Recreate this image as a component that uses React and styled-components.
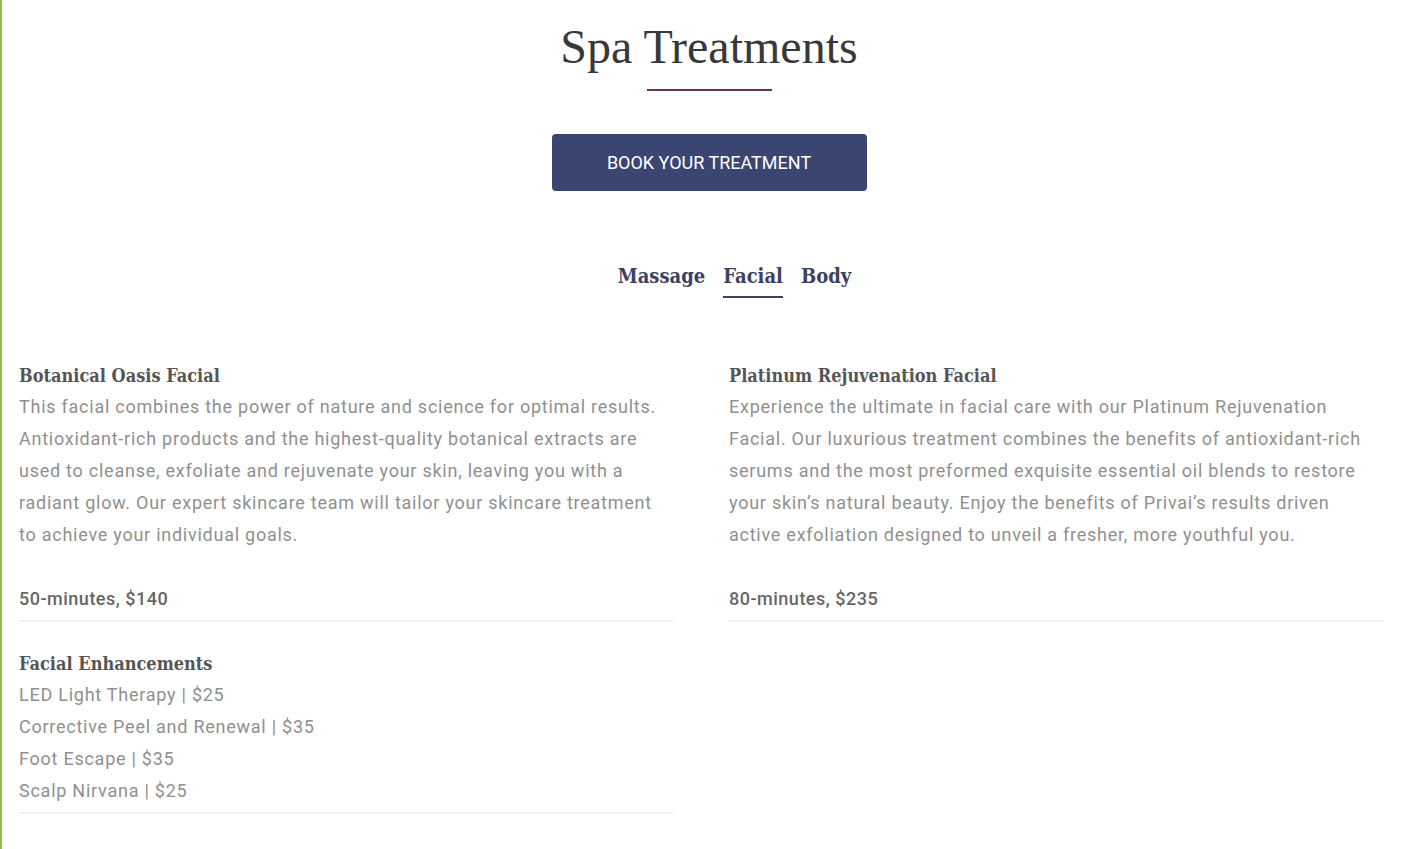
import React, { useState } from "react";
import styled, { createGlobalStyle } from "styled-components";

const GlobalStyle = createGlobalStyle`
  html, body {
    margin: 0;
    padding: 0;
    background: #fff;
  }
  body {
    font-family: Roboto, "Liberation Sans", sans-serif;
  }
`;

const Page = styled.div`
  min-height: 849px;
  border-left: 2px solid #8bc34a;
  box-sizing: border-box;
  padding: 23px 22px 0 17px;
`;

const Header = styled.header`
  display: flex;
  flex-direction: column;
  align-items: center;
  padding-left: 16px;
`;

const Title = styled.h1`
  margin: 0;
  font-family: "Liberation Serif", "Times New Roman", serif;
  font-weight: 400;
  font-size: 48px;
  line-height: 48px;
  color: #383838;
`;

const TitleRule = styled.div`
  width: 125px;
  height: 2px;
  background: #6e2f5e;
  margin-top: 18px;
`;

const BookButton = styled.button`
  margin-top: 43px;
  width: 315px;
  height: 57px;
  border: none;
  border-radius: 4px;
  background: #3b4571;
  color: #fff;
  font-family: Roboto, "Liberation Sans", sans-serif;
  font-size: 18px;
  cursor: pointer;
`;

const Tabs = styled.nav`
  margin: 73px 0 0 51px;
  display: flex;
  gap: 18px;
`;

const Tab = styled.button`
  border: none;
  background: none;
  padding: 0 0 8px;
  font-family: "DejaVu Serif Condensed", "DejaVu Serif", serif;
  font-size: 20px;
  font-weight: 600;
  color: #3c4163;
  border-bottom: 2px solid ${p => (p.$active ? "#3c4163" : "transparent")};
  cursor: pointer;
`;

const Columns = styled.div`
  margin-top: 62px;
  display: grid;
  grid-template-columns: 1fr 1fr;
  column-gap: 56px;
  align-items: start;
`;

const Column = styled.div`
  display: flex;
  flex-direction: column;
`;

const Item = styled.section`
  border-bottom: 2px solid #f1f1f1;
  padding-bottom: 5px;
  margin-bottom: 26px;
`;

const ItemTitle = styled.h3`
  margin: 0;
  font-family: "DejaVu Serif Condensed", "DejaVu Serif", serif;
  font-weight: 600;
  font-size: 18px;
  line-height: 31px;
  color: #555;
`;

const Text = styled.p`
  margin: 0;
  font-size: 18px;
  font-weight: 400;
  letter-spacing: 0.75px;
  line-height: 32px;
  color: #909090;
`;

const Price = styled.p`
  margin: 32px 0 0;
  font-size: 18px;
  font-weight: 500;
  letter-spacing: 0.5px;
  line-height: 32px;
  color: #666;
`;

const Lines = ({ lines }) => (
  <Text>
    {lines.map((l, i) => (
      <React.Fragment key={i}>
        {l}
        {i < lines.length - 1 && <br />}
      </React.Fragment>
    ))}
  </Text>
);

export default function App() {
  const [tab, setTab] = useState("Facial");
  return (
    <>
      <GlobalStyle />
      <Page>
        <Header>
          <Title>Spa Treatments</Title>
          <TitleRule />
          <BookButton>BOOK YOUR TREATMENT</BookButton>
          <Tabs>
            {["Massage", "Facial", "Body"].map(t => (
              <Tab key={t} $active={tab === t} onClick={() => setTab(t)}>
                {t}
              </Tab>
            ))}
          </Tabs>
        </Header>
        <Columns>
          <Column>
            <Item>
              <ItemTitle>Botanical Oasis Facial</ItemTitle>
              <Lines
                lines={[
                  "This facial combines the power of nature and science for optimal results.",
                  "Antioxidant-rich products and the highest-quality botanical extracts are",
                  "used to cleanse, exfoliate and rejuvenate your skin, leaving you with a",
                  "radiant glow. Our expert skincare team will tailor your skincare treatment",
                  "to achieve your individual goals.",
                ]}
              />
              <Price>50-minutes, $140</Price>
            </Item>
            <Item>
              <ItemTitle>Facial Enhancements</ItemTitle>
              <Lines
                lines={[
                  "LED Light Therapy | $25",
                  "Corrective Peel and Renewal | $35",
                  "Foot Escape | $35",
                  "Scalp Nirvana | $25",
                ]}
              />
            </Item>
          </Column>
          <Column>
            <Item>
              <ItemTitle>Platinum Rejuvenation Facial</ItemTitle>
              <Lines
                lines={[
                  "Experience the ultimate in facial care with our Platinum Rejuvenation",
                  "Facial. Our luxurious treatment combines the benefits of antioxidant-rich",
                  "serums and the most preformed exquisite essential oil blends to restore",
                  "your skin\u2019s natural beauty. Enjoy the benefits of Privai\u2019s results driven",
                  "active exfoliation designed to unveil a fresher, more youthful you.",
                ]}
              />
              <Price>80-minutes, $235</Price>
            </Item>
          </Column>
        </Columns>
      </Page>
    </>
  );
}
